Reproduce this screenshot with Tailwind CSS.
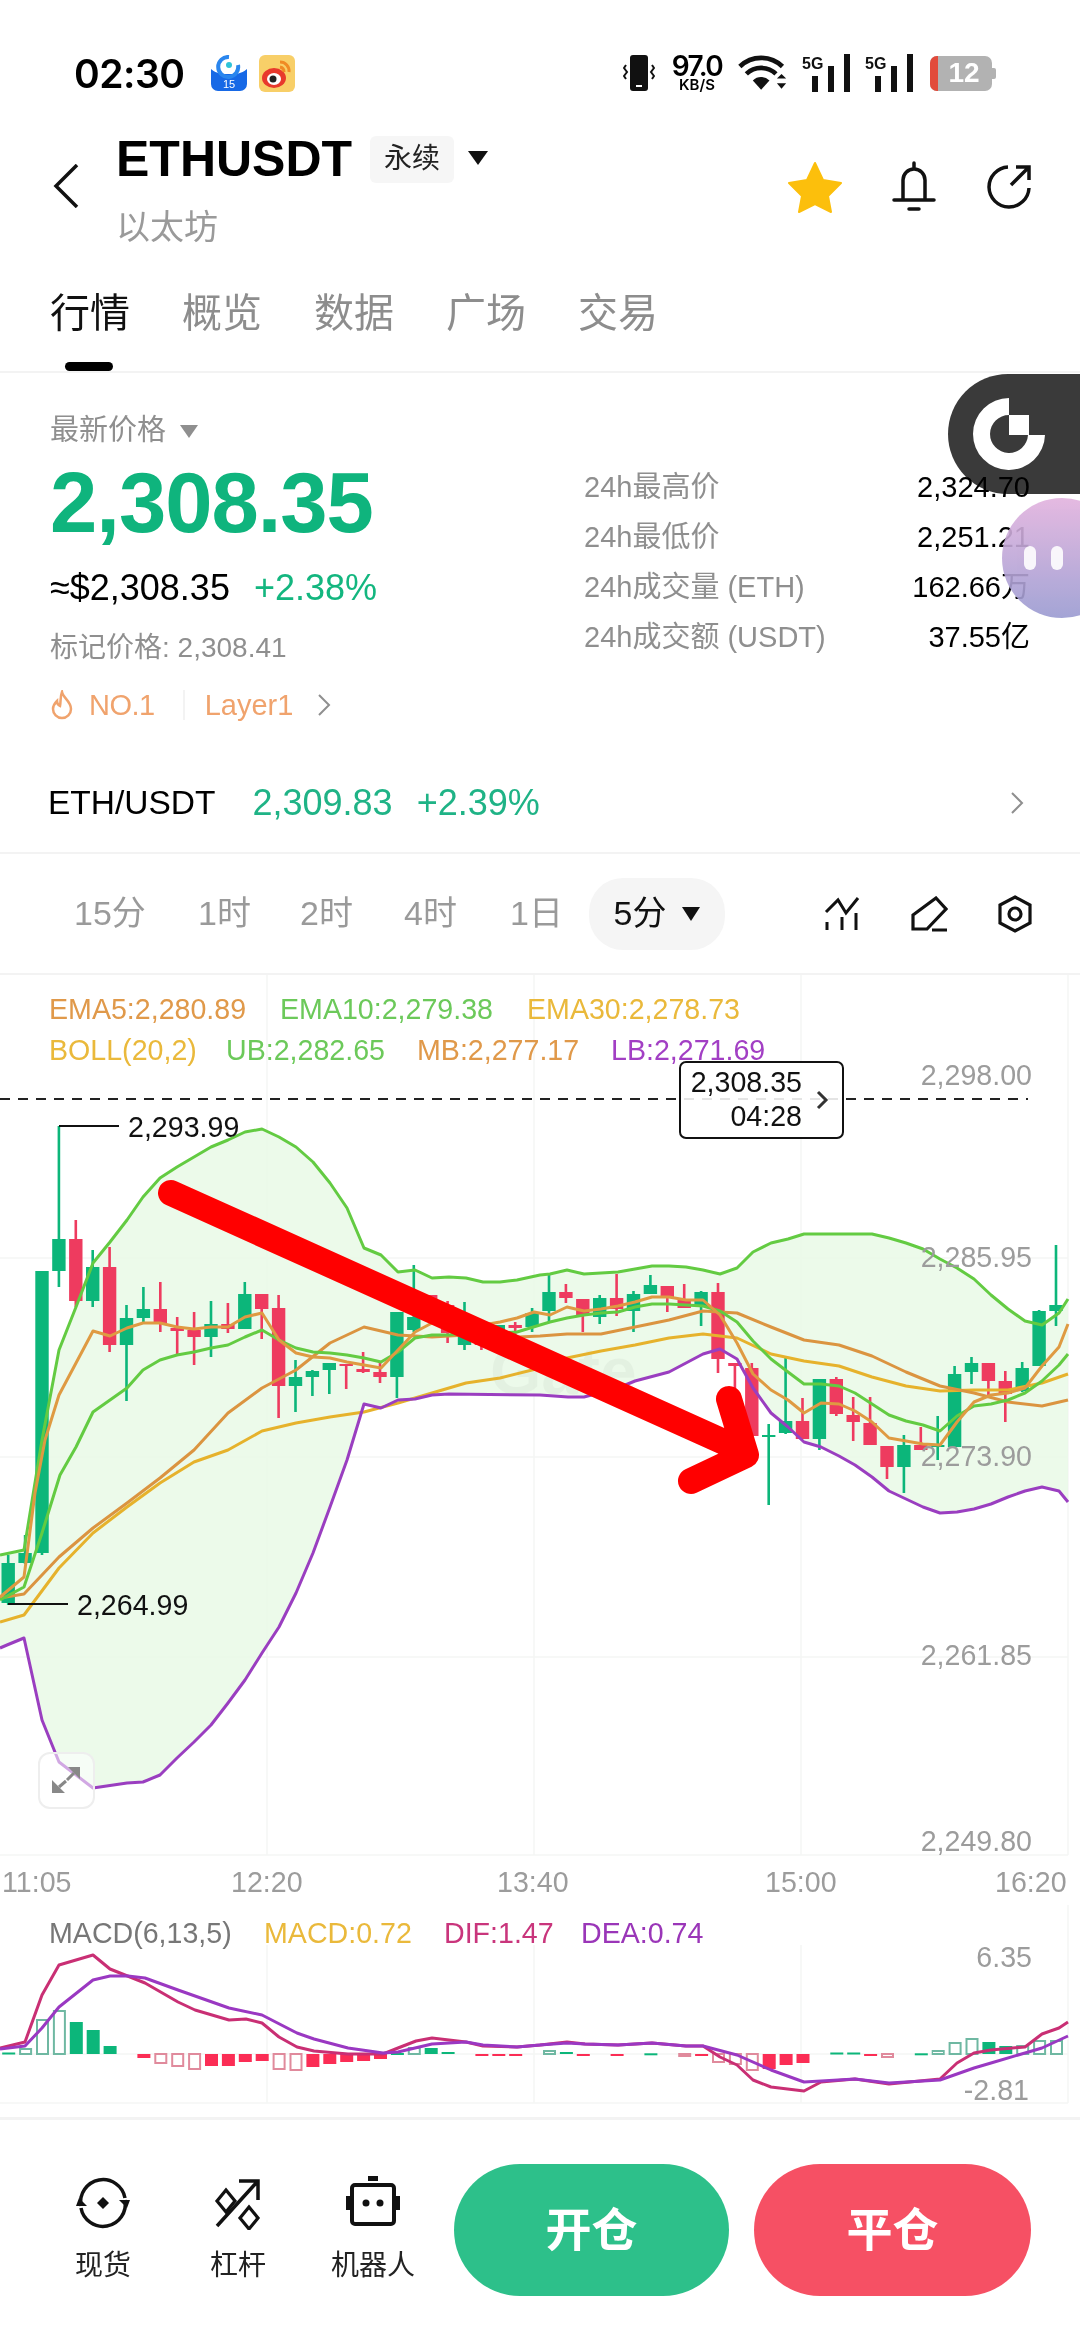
<!DOCTYPE html>
<html lang="zh">
<head>
  <meta charset="UTF-8" />
  <meta name="viewport" content="width=device-width, initial-scale=1.0" />
  <title>ETHUSDT</title>
  <script src="https://cdn.jsdelivr.net/npm/@tailwindcss/browser@4"></script>
</head>
<body class="relative w-[1080px] h-[2344px] overflow-hidden bg-white text-black [font-family:'Liberation_Sans','Noto_Sans_CJK_SC',sans-serif]">

  <!-- Status bar -->
  <div class="flex items-center h-[66px] mt-[40px] pl-[74px]">
    <span class="w-[137px] text-[39px] font-semibold leading-none tracking-[-0.5px] [font-family:Inter,sans-serif]">02:30</span>
    <svg width="36" height="36" viewBox="0 0 36 36">
      <path d="M0 14c6 5 11 5 18 5s12 0 18-5v15a7 7 0 0 1-7 7H7a7 7 0 0 1-7-7z" fill="#1769e6"/>
      <path d="M18 2a10 10 0 1 0 9 8" fill="none" stroke="#2a86ee" stroke-width="4"/>
      <circle cx="18" cy="10" r="3" fill="#2fc3d8"/>
      <text x="18" y="33" text-anchor="middle" fill="#fff" class="text-[11px]">15</text>
    </svg>
    <svg class="ml-[12px]" width="36" height="37" viewBox="0 0 36 37">
      <rect width="36" height="37" rx="6" fill="#f8cf68"/>
      <ellipse cx="15" cy="23" rx="12" ry="10" fill="#e8392c"/>
      <ellipse cx="15" cy="24" rx="7" ry="6" fill="#fff"/>
      <circle cx="14" cy="24" r="3.5" fill="#222"/>
      <path d="M21 7a9 9 0 0 1 9 10M21 12a5 5 0 0 1 4 5" fill="none" stroke="#f08a24" stroke-width="3"/>
    </svg>
    <div class="ml-auto mr-[84px] flex items-center">
      <svg width="32" height="38" viewBox="0 0 32 38">
        <rect x="7" y="1" width="18" height="36" rx="3" fill="#111"/>
        <rect x="13" y="31" width="6" height="2" fill="#fff"/>
        <path d="M3 11l-2 3 3 4-3 4 2 3M29 11l2 3-3 4 3 4-2 3" fill="none" stroke="#111" stroke-width="2"/>
      </svg>
      <div class="w-[56px] ml-[14px] flex flex-col items-center leading-none">
        <span class="text-[28px] font-semibold tracking-[-1.5px] h-[24px] leading-[24px] [font-family:Inter,sans-serif]">97.0</span>
        <span class="text-[15px] font-semibold h-[14px] leading-[14px] [font-family:Inter,sans-serif]">KB/S</span>
      </div>
      <svg class="ml-[13px]" width="50" height="38" viewBox="0 0 54 38">
        <path d="M2 12a33 33 0 0 1 46 0M9 20a23 23 0 0 1 32 0" fill="none" stroke="#111" stroke-width="5"/>
        <path d="M16 27a13 13 0 0 1 18 0L25 37z" fill="#111"/>
        <path d="M42 25l5-5 5 5zM42 30h10l-5 6z" fill="#111"/>
      </svg>
      <svg class="ml-[14px]" width="48" height="38" viewBox="0 0 48 38">
        <text x="0" y="15" fill="#111" class="text-[16px] font-bold">5G</text>
        <path d="M10 22h6v16h-6zM26 12h6v26h-6zM42 0h6v38h-6z" fill="#111"/>
      </svg>
      <svg class="ml-[15px]" width="48" height="38" viewBox="0 0 48 38">
        <text x="0" y="15" fill="#111" class="text-[16px] font-bold">5G</text>
        <path d="M10 22h6v16h-6zM26 12h6v26h-6zM42 0h6v38h-6z" fill="#111"/>
      </svg>
      <div class="relative ml-[17px] w-[62px] h-[35px] rounded-[7px] bg-[#b2b2b2] overflow-hidden flex items-center justify-center">
        <div class="absolute left-0 top-0 bottom-0 w-[8px] bg-[#e24b3b]"></div>
        <span class="text-white font-bold text-[28px] leading-none pl-[6px]">12</span>
      </div>
      <div class="w-[4px] h-[11px] bg-[#b2b2b2] rounded-r-[2px]"></div>
    </div>
  </div>

  <!-- Title row -->
  <div class="flex mt-[28px] h-[113px]">
    <div class="w-[116px] pl-[53px] pt-[30px]">
      <svg width="26" height="44" viewBox="0 0 26 44"><path d="M24 1L3 22l21 21" fill="none" stroke="#111" stroke-width="3.5"/></svg>
    </div>
    <div>
      <div class="flex items-center h-[50px]">
        <span class="text-[50px] font-bold leading-none">ETHUSDT</span>
        <span class="ml-[18px] w-[84px] h-[47px] rounded-[6px] bg-[#f6f6f6] flex items-center justify-center text-[28px] text-[#222]">永续</span>
        <span class="ml-[14px] w-0 h-0 border-x-[10px] border-x-transparent border-t-[14px] border-t-[#111] mb-[2px]"></span>
      </div>
      <div class="mt-[23px] text-[34px] leading-[40px] text-[#9a9a9a]">以太坊</div>
    </div>
    <div class="ml-auto mr-[48px] flex items-center gap-[50px] h-[106px]">
      <svg width="54" height="52" viewBox="0 0 54 52"><path d="M27 2l8 17 18 3-13 13 3 16-16-8-16 8 3-16L1 22l18-3z" fill="#fcbf0c" stroke="#fcbf0c" stroke-linejoin="round" stroke-width="2"/></svg>
      <svg width="44" height="52" viewBox="0 0 44 52"><path d="M11 38V19a11 11 0 0 1 22 0v19M22 2v6M2 39h40M17 48h10" fill="none" stroke="#111" stroke-width="3.5" stroke-linecap="round"/></svg>
      <svg width="46" height="46" viewBox="0 0 46 46"><path d="M22 3A20 20 0 1 0 43 24M25 21L43 3M30 3h13v13" fill="none" stroke="#111" stroke-width="3.5"/></svg>
    </div>
  </div>

  <!-- Tabs -->
  <div class="relative flex h-[126px] pl-[50px] pt-[42px] gap-[52px] text-[40px] leading-[48px] text-[#8d8d8d] border-b-2 border-[#f3f3f3]">
    <span class="text-[#111]">行情</span>
    <span>概览</span>
    <span>数据</span>
    <span>广场</span>
    <span>交易</span>
    <div class="absolute left-[65px] bottom-0 w-[48px] h-[9px] rounded-full bg-black"></div>
  </div>

  <!-- Price summary -->
  <div class="flex h-[391px] pl-[50px]">
    <div class="w-[534px]">
      <div class="flex items-center h-[32px] mt-[42px] text-[29px] text-[#8f8f8f]">
        最新价格
        <span class="ml-[14px] w-0 h-0 border-x-[9px] border-x-transparent border-t-[13px] border-t-[#8f8f8f]"></span>
      </div>
      <div class="mt-[14px] text-[85px] font-bold leading-[84px] tracking-[-1px] text-[#0fb47d]">2,308.35</div>
      <div class="flex items-center mt-[26px] h-[34px] text-[36px] leading-none">
        <span>≈$2,308.35</span>
        <span class="ml-[24px] text-[#13b67f]">+2.38%</span>
      </div>
      <div class="mt-[27px] h-[32px] text-[28px] leading-[32px] text-[#8f8f8f]">标记价格: 2,308.41</div>
      <div class="flex items-center mt-[25px] h-[32px] text-[29px] leading-none text-[#f0a36d]">
        <svg width="24" height="30" viewBox="0 0 24 30"><path d="M12 2c1 6 9 9 9 17a9 9 0 0 1-18 0c0-4 2-6 4-8 0 3 1 4 3 5 1-5 0-9 2-14z" fill="none" stroke="#f0a36d" stroke-width="2.5"/></svg>
        <span class="ml-[15px] tracking-[-0.5px]">NO.1</span>
        <span class="ml-[28px] w-[2px] h-[30px] bg-[#f3f3f3]"></span>
        <span class="ml-[20px]">Layer1</span>
        <svg class="ml-[24px]" width="14" height="24" viewBox="0 0 14 24"><path d="M2 2l10 10L2 22" fill="none" stroke="#8f8f8f" stroke-width="2"/></svg>
      </div>
    </div>
    <div class="flex-1 pr-[50px] pt-[90px] text-[29px]">
      <div class="flex justify-between items-center h-[50px]"><span class="text-[#8f8f8f]">24h最高价</span><span>2,324.70</span></div>
      <div class="flex justify-between items-center h-[50px]"><span class="text-[#8f8f8f]">24h最低价</span><span>2,251.21</span></div>
      <div class="flex justify-between items-center h-[50px]"><span class="text-[#8f8f8f]">24h成交量 (ETH)</span><span>162.66万</span></div>
      <div class="flex justify-between items-center h-[50px]"><span class="text-[#8f8f8f]">24h成交额 (USDT)</span><span>37.55亿</span></div>
    </div>
  </div>

  <!-- Spot pair row -->
  <div class="flex items-center h-[90px] pb-[10px] pl-[48px] pr-[56px] text-[33.5px] border-b-2 border-[#f3f3f3]">
    <span>ETH/USDT</span>
    <span class="ml-[37px] text-[36px] text-[#1fb386]">2,309.83</span>
    <span class="ml-[24px] text-[36px] text-[#1fb386]">+2.39%</span>
    <svg class="ml-auto" width="14" height="24" viewBox="0 0 14 24"><path d="M2 2l10 10L2 22" fill="none" stroke="#8f8f8f" stroke-width="2"/></svg>
  </div>

  <!-- Timeframes -->
  <div class="flex items-center h-[121px] pl-[74px] pr-[48px] text-[34px] text-[#9a9a9a] border-b-2 border-[#f3f3f3]">
    <span class="w-[124px]">15分</span>
    <span class="w-[102px]">1时</span>
    <span class="w-[104px]">2时</span>
    <span class="w-[106px]">4时</span>
    <span class="w-[79px]">1日</span>
    <div class="flex items-center justify-center gap-[16px] w-[136px] h-[72px] rounded-[34px] bg-[#f5f5f5] text-[#111]">
      5分
      <span class="w-0 h-0 border-x-[9px] border-x-transparent border-t-[14px] border-t-[#111]"></span>
    </div>
    <div class="ml-auto flex items-center gap-[50px]">
      <svg width="36" height="34" viewBox="0 0 36 34"><path d="M2 15L14 3l8 13L34 1M3 25v8M18 20v13M32 16v17" fill="none" stroke="#111" stroke-width="3"/></svg>
      <svg width="38" height="36" viewBox="0 0 38 36"><path d="M26 2l10 11-19 20H3V19zM22 34h15" fill="none" stroke="#111" stroke-width="3.2"/></svg>
      <svg width="34" height="38" viewBox="0 0 34 38"><path d="M17 2l15 8v18l-15 8-15-8V10z" fill="none" stroke="#111" stroke-width="3.2"/><circle cx="17" cy="19" r="6" fill="none" stroke="#111" stroke-width="3.2"/></svg>
    </div>
  </div>

  <!-- Main chart: page coordinates in the viewBox -->
  <svg id="chart" class="block" width="1080" height="930" viewBox="0 975 1080 930"></svg>

  <!-- MACD -->
  <svg id="macd" class="block" width="1080" height="212" viewBox="0 1905 1080 212"></svg>
  <div class="h-[3px] bg-[#f3f3f3]"></div>

  <!-- Bottom bar -->
  <div class="flex h-[224px]">
    <div class="flex pt-[56px] pl-[60px] w-[454px]">
      <div class="flex flex-col items-center w-[86px]">
        <svg width="54" height="54" viewBox="0 0 54 54">
          <path d="M5 30A22 22 0 0 1 49 22M49 24A22 22 0 0 1 5 32" fill="none" stroke="#111" stroke-width="3.5"/>
          <path d="M3 22l8 8H0zM51 32l-8-8h11z" fill="#111"/>
          <path d="M27 21l6 6-6 6-6-6z" fill="#111"/>
        </svg>
        <span class="mt-[20px] text-[28px] leading-[32px] text-[#222]">现货</span>
      </div>
      <div class="flex flex-col items-center w-[86px] ml-[49px]">
        <svg width="54" height="54" viewBox="0 0 54 54">
          <path d="M6 50L46 6M28 5h19v19" fill="none" stroke="#111" stroke-width="3.5"/>
          <path d="M15 14l9 11-9 11-9-11zM38 31l9 11-9 11-9-11z" fill="none" stroke="#111" stroke-width="3.2"/>
        </svg>
        <span class="mt-[20px] text-[28px] leading-[32px] text-[#222]">杠杆</span>
      </div>
      <div class="flex flex-col items-center w-[86px] ml-[49px]">
        <svg width="54" height="54" viewBox="0 0 54 54">
          <path d="M22 0h10v5H22z" fill="#111"/>
          <rect x="6" y="9" width="42" height="39" rx="3" fill="none" stroke="#111" stroke-width="4"/>
          <path d="M0 20h4v14H0zM50 20h4v14h-4z" fill="#111"/>
          <circle cx="20" cy="27" r="3.5" fill="#111"/><circle cx="34" cy="27" r="3.5" fill="#111"/>
        </svg>
        <span class="mt-[20px] text-[28px] leading-[32px] text-[#222] whitespace-nowrap">机器人</span>
      </div>
    </div>
    <button class="mt-[44px] w-[275px] h-[132px] rounded-[66px] bg-[#2dc08a] text-white text-[46px] font-bold">开仓</button>
    <button class="mt-[44px] ml-[25px] w-[277px] h-[132px] rounded-[66px] bg-[#f65064] text-white text-[46px] font-bold">平仓</button>
  </div>

  <!-- Floating widgets -->
  <div class="absolute left-[948px] top-[374px] w-[132px] h-[120px] rounded-l-[60px] bg-[#3a3a3a] flex items-center pl-[24px] mix-blend-multiply">
    <svg width="74" height="74" viewBox="0 0 74 74"><path d="M37 1v17a19 19 0 1 0 19 20h17A36 36 0 1 1 37 1zM37 18h20v20H37z" fill="#fff"/></svg>
  </div>
  <div class="absolute left-[1002px] top-[498px] w-[120px] h-[120px] rounded-full bg-gradient-to-b from-[#e2b2de] to-[#9a9bd1] opacity-90 flex items-center pl-[22px] gap-[15px]">
    <span class="w-[12px] h-[24px] rounded-full bg-white/90"></span>
    <span class="w-[12px] h-[24px] rounded-full bg-white/90"></span>
  </div>

  <script>
    const GREEN = "#0cb67a", RED = "#ee3b5f";

    // candles: colour, wickTop, bodyTop, bodyBottom, wickBottom
    const candles = [
      ["g",1555,1563,1603,1605],["g",1535,1553,1563,1564],["g",1271,1271,1553,1555],["g",1126,1239,1271,1287],
      ["r",1220,1239,1301,1307],["g",1250,1267,1301,1307],["r",1247,1267,1345,1352],["g",1305,1318,1345,1401],
      ["g",1287,1309,1318,1322],["r",1282,1309,1323,1332],["r",1317,1328,1331,1355],["r",1312,1330,1337,1365],
      ["g",1301,1324,1337,1357],["r",1303,1324,1329,1333],["g",1282,1294,1329,1329],["r",1294,1294,1309,1339],
      ["r",1295,1308,1386,1418],["g",1360,1377,1386,1412],["g",1370,1371,1377,1396],["g",1363,1363,1370,1394],
      ["r",1364,1364,1366,1389],["r",1352,1369,1372,1373],["r",1362,1372,1377,1383],["g",1312,1312,1377,1398],
      ["g",1265,1317,1330,1332],["r",1295,1295,1317,1320],["r",1301,1305,1333,1343],["g",1302,1335,1345,1350],
      ["r",1330,1335,1345,1350],["g",1325,1325,1333,1340],["r",1322,1325,1328,1336],["g",1308,1313,1327,1332],
      ["g",1275,1292,1311,1322],["r",1284,1292,1298,1303],["r",1299,1299,1315,1332],["g",1295,1298,1317,1324],
      ["r",1274,1298,1309,1316],["g",1291,1294,1311,1332],["g",1275,1285,1294,1294],["r",1286,1286,1298,1312],
      ["r",1284,1299,1308,1308],["g",1291,1292,1306,1326],["r",1283,1292,1359,1373],["r",1363,1363,1366,1391],
      ["r",1363,1368,1436,1436],["g",1424,1435,1437,1505],["g",1356,1421,1433,1434],["r",1398,1421,1439,1439],
      ["g",1379,1379,1439,1450],["r",1377,1379,1414,1416],["r",1397,1415,1422,1441],["r",1397,1423,1445,1445],
      ["r",1446,1446,1467,1479],["g",1435,1445,1467,1493],["r",1427,1445,1450,1450],["g",1416,1445,1447,1460],
      ["g",1366,1374,1447,1447],["g",1357,1363,1372,1384],["r",1363,1363,1381,1395],["r",1371,1381,1394,1422],
      ["g",1362,1368,1391,1392],["g",1310,1311,1366,1366],["g",1245,1305,1311,1326]
    ];

    const ub = "0,1555 24,1550 42,1440 59,1350 76,1307 93,1263 110,1242 127,1220 143,1197 160,1178 177,1167 194,1157 211,1147 228,1140 245,1132 262,1129 279,1137 296,1147 313,1162 330,1183 347,1208 364,1248 381,1255 398,1272 415,1270 432,1278 449,1277 466,1278 483,1282 500,1282 517,1280 540,1275 550,1274 567,1270 584,1274 601,1273 618,1272 635,1269 652,1266 669,1266 686,1267 703,1270 720,1274 737,1268 753,1252 771,1243 788,1239 804,1234 821,1234 839,1234 855,1234 872,1234 889,1238 906,1243 923,1249 940,1259 957,1268 974,1279 991,1295 1008,1309 1025,1321 1042,1325 1059,1313 1068,1299";
    const lb = "0,1648 7,1645 24,1638 42,1720 59,1762 93,1788 127,1783 143,1782 160,1775 177,1758 194,1742 211,1725 228,1703 245,1680 262,1653 279,1627 296,1593 313,1553 330,1507 347,1460 364,1404 381,1408 398,1400 415,1399 432,1395 449,1394 540,1395 568,1397 584,1397 618,1388 635,1381 669,1372 686,1363 703,1354 720,1349 737,1359 753,1388 771,1413 788,1427 804,1442 821,1447 839,1456 855,1465 872,1477 889,1491 906,1499 923,1507 940,1513 957,1512 974,1509 991,1504 1008,1497 1025,1491 1042,1487 1059,1491 1068,1502";
    const ema10 = "0,1600 24,1587 42,1533 60,1475 76,1447 93,1412 127,1388 143,1370 160,1360 177,1355 194,1352 211,1348 228,1345 245,1337 262,1330 279,1340 296,1348 313,1352 330,1353 347,1355 364,1358 381,1362 398,1352 415,1338 432,1335 449,1335 466,1332 483,1332 500,1333 517,1332 540,1325 550,1322 567,1318 584,1315 601,1313 618,1312 635,1307 652,1304 669,1304 686,1305 703,1306 720,1311 737,1322 753,1341 771,1359 788,1372 804,1384 821,1384 839,1386 855,1393 872,1404 889,1415 906,1421 923,1425 940,1431 957,1416 974,1406 991,1404 1008,1400 1025,1393 1042,1381 1059,1365 1068,1354";
    const ema5 = "0,1597 24,1577 35,1493 45,1440 59,1395 76,1363 93,1331 110,1336 127,1328 143,1323 160,1323 177,1327 194,1329 211,1327 228,1327 245,1317 262,1313 279,1340 296,1353 313,1357 330,1358 347,1362 364,1365 381,1368 398,1350 415,1332 432,1323 449,1320 466,1320 483,1325 500,1322 517,1318 534,1312 550,1315 567,1307 584,1311 601,1309 618,1306 635,1302 652,1297 669,1297 686,1300 703,1300 720,1315 737,1343 753,1374 771,1390 788,1400 804,1413 821,1403 839,1404 855,1411 872,1422 889,1438 906,1441 923,1444 940,1445 957,1422 974,1402 991,1395 1008,1393 1025,1388 1042,1366 1059,1347 1068,1324";
    const mb = "0,1598 24,1594 59,1557 93,1528 127,1503 160,1478 194,1450 228,1413 262,1388 296,1370 330,1343 364,1327 398,1335 432,1337 466,1335 500,1338 540,1336 567,1334 601,1334 635,1327 669,1320 703,1311 737,1313 771,1327 804,1340 839,1345 872,1356 906,1372 940,1386 974,1393 1008,1402 1042,1406 1068,1400";
    const ema30 = "0,1622 24,1615 59,1568 93,1533 127,1507 160,1483 194,1462 228,1450 262,1431 296,1423 330,1417 364,1412 398,1403 432,1393 466,1383 500,1378 540,1368 567,1358 601,1351 635,1345 669,1338 703,1334 737,1338 771,1354 804,1361 839,1366 872,1377 906,1386 940,1391 974,1390 1008,1390 1042,1383 1068,1374";

    const dif = "0,2048 25,2042 42,1995 59,1965 93,1955 110,1969 145,1983 178,2002 195,2010 229,2020 246,2019 262,2023 279,2037 297,2047 314,2051 348,2054 383,2054 398,2048 416,2041 432,2038 466,2042 483,2046 517,2047 540,2045 567,2042 585,2044 618,2045 652,2043 686,2046 703,2046 720,2057 737,2065 753,2080 771,2087 804,2091 821,2082 855,2079 889,2084 940,2079 957,2063 974,2053 991,2050 1025,2047 1042,2034 1059,2028 1068,2022";
    const dea = "0,2049 25,2046 42,2028 59,2007 93,1980 110,1976 128,1976 145,1978 178,1990 229,2008 262,2015 297,2033 314,2039 348,2048 383,2053 398,2052 432,2044 466,2042 483,2045 517,2047 540,2045 567,2043 585,2044 618,2045 652,2043 686,2046 703,2046 737,2055 771,2070 804,2082 855,2079 889,2083 940,2080 974,2068 991,2063 1025,2053 1042,2048 1068,2036";

    // histogram: candle slot, px above the zero line, "h" = hollow bar
    const bars = [[0,1.5],[1,5,"h"],[2,34,"h"],[3,43,"h"],[4,32],[5,24],[6,8],[8,-4],[9,-9,"h"],[10,-12,"h"],[11,-15,"h"],[12,-12],[13,-12],[14,-8],[15,-7],[16,-15,"h"],[17,-16,"h"],[18,-13],[19,-10],[20,-8],[21,-7],[22,-5],[23,1],[24,6,"h"],[25,6],[26,2],[28,-1.5],[29,-1],[30,-1],[32,3,"h"],[33,2],[34,-0.7],[36,-1],[38,0.7],[40,-2,"h"],[41,-1],[42,-8,"h"],[43,-10,"h"],[44,-16,"h"],[45,-15],[46,-11],[47,-9],[49,1.5],[50,1.5],[51,-0.7],[52,-3,"h"],[54,0.7],[55,3,"h"],[56,11,"h"],[57,15,"h"],[58,12],[59,8],[60,8,"h"],[61,13,"h"],[62,13,"h"]];

    const cx = i => 8.2 + 16.9 * i;

    function line(pts, color, w) {
      return `<polyline points="${pts}" fill="none" stroke="${color}" stroke-width="${w}" stroke-linejoin="round"/>`;
    }
    function label(x, y, txt, fill, anchor) {
      return `<text x="${x}" y="${y}" fill="${fill}" text-anchor="${anchor || "start"}" class="text-[28.6px]">${txt}</text>`;
    }

    // Main chart
    let s = "";
    [267, 534, 801, 1068].forEach(x => s += `<path d="M${x} 975V1855" stroke="#f5f6f5" stroke-width="1.5"/>`);
    [1258, 1457, 1657, 1855].forEach(y => s += `<path d="M0 ${y}H1068" stroke="#f5f6f5" stroke-width="1.5"/>`);
    s += `<polygon points="${ub} ${lb.split(" ").reverse().join(" ")}" fill="#e9f9e6" fill-opacity="0.85"/>`;
    s += `<text x="490" y="1394" fill="#000" fill-opacity="0.035" class="text-[66px] font-bold">Gate</text>`;
    candles.forEach((c, i) => {
      const col = c[0] === "g" ? GREEN : RED, x = cx(i);
      s += `<rect x="${x - 1.3}" y="${c[1]}" width="2.6" height="${c[4] - c[1]}" fill="${col}"/>`;
      s += `<rect x="${x - 6.7}" y="${c[2]}" width="13.4" height="${c[3] - c[2]}" fill="${col}"/>`;
    });
    s += line(ub, "#63cb42", 3) + line(ema30, "#e6b22c", 3) + line(mb, "#db9440", 3);
    s += line(ema10, "#63cb42", 3) + line(ema5, "#df9a42", 3) + line(lb, "#9a3ec0", 3);

    // legend
    s += label(49, 1019, "EMA5:2,280.89", "#e0994a") + label(280, 1019, "EMA10:2,279.38", "#6cc95a") + label(527, 1019, "EMA30:2,278.73", "#eab93b");
    s += label(49, 1060, "BOLL(20,2)", "#eab93b") + label(226, 1060, "UB:2,282.65", "#6cc95a") + label(417, 1060, "MB:2,277.17", "#e0994a") + label(611, 1060, "LB:2,271.69", "#a23fc4");

    // axis
    [[1085, "2,298.00"], [1267, "2,285.95"], [1466, "2,273.90"], [1665, "2,261.85"], [1851, "2,249.80"]].forEach(a => s += label(1032, a[0], a[1], "#9c9c9c", "end"));
    [[2, "11:05"], [231, "12:20"], [497, "13:40"], [765, "15:00"], [995, "16:20"]].forEach(a => s += label(a[0], 1892, a[1], "#9c9c9c"));

    // high / low / last price
    s += `<path d="M59 1126H119M8 1604H68" stroke="#111" stroke-width="2"/>`;
    s += label(128, 1137, "2,293.99", "#111") + label(77, 1615, "2,264.99", "#111");
    s += `<path d="M0 1099H1028" stroke="#222" stroke-width="2" stroke-dasharray="10 8"/>`;
    s += `<rect x="680" y="1062" width="163" height="76" rx="6" fill="#fff" fill-opacity="0.88" stroke="#111" stroke-width="2"/>`;
    s += label(802, 1092, "2,308.35", "#111", "end") + label(802, 1126, "04:28", "#111", "end");
    s += `<path d="M818 1092l8 8-8 8" fill="none" stroke="#333" stroke-width="3"/>`;

    // expand button
    s += `<rect x="39" y="1753" width="55" height="55" rx="11" fill="#fff" fill-opacity="0.55" stroke="#eeeeee" stroke-width="2"/>`;
    s += `<path d="M80 1767v12l-12-12zM52 1793v-13l13 13z" fill="#888"/><path d="M74 1773l-7 7M66 1781l-7 6" stroke="#888" stroke-width="3"/>`;

    // red annotation arrow
    s += `<path d="M171 1193L735 1447M729 1399L746 1455L691 1481" fill="none" stroke="#ff0000" stroke-width="26" stroke-linecap="round" stroke-linejoin="round"/>`;
    document.getElementById("chart").innerHTML = s;

    // MACD chart
    let m = "";
    [267, 534, 801].forEach(x => m += `<path d="M${x} 1945V2103" stroke="#f5f6f5" stroke-width="1.5"/>`);
    m += `<path d="M1068 1905V2103M0 2103H1068M0 2054H1068" stroke="#f5f6f5" stroke-width="1.5"/>`;
    bars.forEach(b => {
      const x = cx(b[0]) - 6, h = Math.abs(b[1]), y = b[1] > 0 ? 2054 - h : 2054;
      const col = b[1] > 0 ? GREEN : "#fb2d55";
      if (b[2]) {
        const edge = b[1] > 0 ? "#6fb8a2" : "#e08a9c";
        m += `<rect x="${x + 1}" y="${y}" width="11" height="${h}" fill="none" stroke="${edge}" stroke-width="2"/>`;
      } else {
        m += `<rect x="${x}" y="${y}" width="13" height="${Math.max(h, 2)}" fill="${col}"/>`;
      }
    });
    m += line(dif, "#c92f74", 3) + line(dea, "#9a38c2", 3);
    m += label(49, 1943, "MACD(6,13,5)", "#777") + label(264, 1943, "MACD:0.72", "#eab93b") + label(444, 1943, "DIF:1.47", "#c9357c") + label(581, 1943, "DEA:0.74", "#9a36b8");
    m += label(1032, 1967, "6.35", "#9c9c9c", "end") + label(1029, 2100, "-2.81", "#9c9c9c", "end");
    document.getElementById("macd").innerHTML = m;
  </script>
</body>
</html>
